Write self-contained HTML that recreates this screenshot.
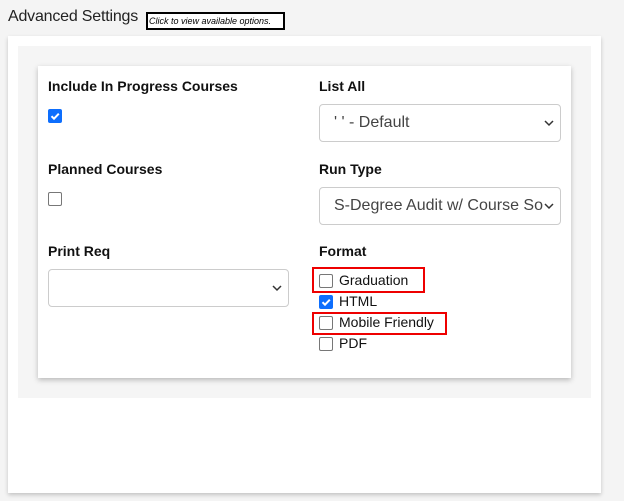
<!DOCTYPE html>
<html><head><style>
body{margin:0;width:624px;height:501px;background:#f4f4f4;font-family:"Liberation Sans",sans-serif;position:relative;overflow:hidden}
.a{position:absolute}
.title{left:8px;top:8px;font-size:16px;color:#222;letter-spacing:-0.2px}
.hint{left:146px;top:12px;width:133px;height:14px;border:2px solid #000;font-size:9px;font-style:italic;padding:0 1px;line-height:15px;background:#fff;white-space:nowrap;overflow:hidden}
.panel{left:8px;top:36px;width:593px;height:457px;background:#fff;box-shadow:0 2px 4px rgba(0,0,0,.2)}
.gray{left:18px;top:46px;width:573px;height:352px;background:#f5f5f5}
.card{left:38px;top:66px;width:533px;height:312px;background:#fff;box-shadow:0 2px 5px rgba(0,0,0,.25)}
.lab{font-weight:bold;font-size:14px;color:#111}
.cb{width:12px;height:12px;border:1px solid #777;border-radius:2px;background:#fff}
.cbc{width:14px;height:14px;border-radius:2px;background:#0d6efd}
.sel{border:1px solid #ccc;border-radius:4px;background:#fff;font-size:16px;color:#444;box-sizing:border-box;padding-left:14px;line-height:35px}
.chev{position:absolute;right:6px;top:14px}
.opt{font-size:14px;color:#111}
.red{border:2px solid #e00;box-sizing:border-box}
</style></head><body>
<div class="a title">Advanced Settings</div>
<div class="a hint">Click to view available options.</div>
<div class="a panel"></div>
<div class="a gray"></div>
<div class="a card"></div>
<div class="a lab" style="left:48px;top:78px">Include In Progress Courses</div>
<div class="a cbc" style="left:48px;top:109px"><svg width="14" height="14"><path d="M3.5 7.2l2.5 2.5 4.8-5" stroke="#fff" stroke-width="2" fill="none"/></svg></div>
<div class="a lab" style="left:48px;top:161px">Planned Courses</div>
<div class="a cb" style="left:48px;top:192px"></div>
<div class="a lab" style="left:48px;top:243px">Print Req</div>
<div class="a sel" style="left:48px;top:269px;width:241px;height:38px"><svg class="chev" width="10" height="8"><path d="M1 2l4 4 4-4" stroke="#333" stroke-width="1.5" fill="none"/></svg></div>
<div class="a lab" style="left:319px;top:78px">List All</div>
<div class="a sel" style="left:319px;top:104px;width:242px;height:38px">' ' - Default<svg class="chev" width="10" height="8"><path d="M1 2l4 4 4-4" stroke="#333" stroke-width="1.5" fill="none"/></svg></div>
<div class="a lab" style="left:319px;top:161px">Run Type</div>
<div class="a sel" style="left:319px;top:187px;width:242px;height:38px;white-space:nowrap;overflow:hidden;padding-right:22px">S-Degree Audit w/ Course So<svg class="chev" width="10" height="8"><path d="M1 2l4 4 4-4" stroke="#333" stroke-width="1.5" fill="none"/></svg></div>
<div class="a lab" style="left:319px;top:243px">Format</div>
<div class="a red" style="left:312px;top:267px;width:113px;height:26px"></div>
<div class="a red" style="left:312px;top:312px;width:135px;height:23px"></div>
<div class="a cb" style="left:319px;top:274px"></div><div class="a opt" style="left:339px;top:272px">Graduation</div>
<div class="a cbc" style="left:319px;top:295px"><svg width="14" height="14"><path d="M3.5 7.2l2.5 2.5 4.8-5" stroke="#fff" stroke-width="2" fill="none"/></svg></div><div class="a opt" style="left:339px;top:293px">HTML</div>
<div class="a cb" style="left:319px;top:316px"></div><div class="a opt" style="left:339px;top:314px">Mobile Friendly</div>
<div class="a cb" style="left:319px;top:337px"></div><div class="a opt" style="left:339px;top:335px">PDF</div>
</body></html>
